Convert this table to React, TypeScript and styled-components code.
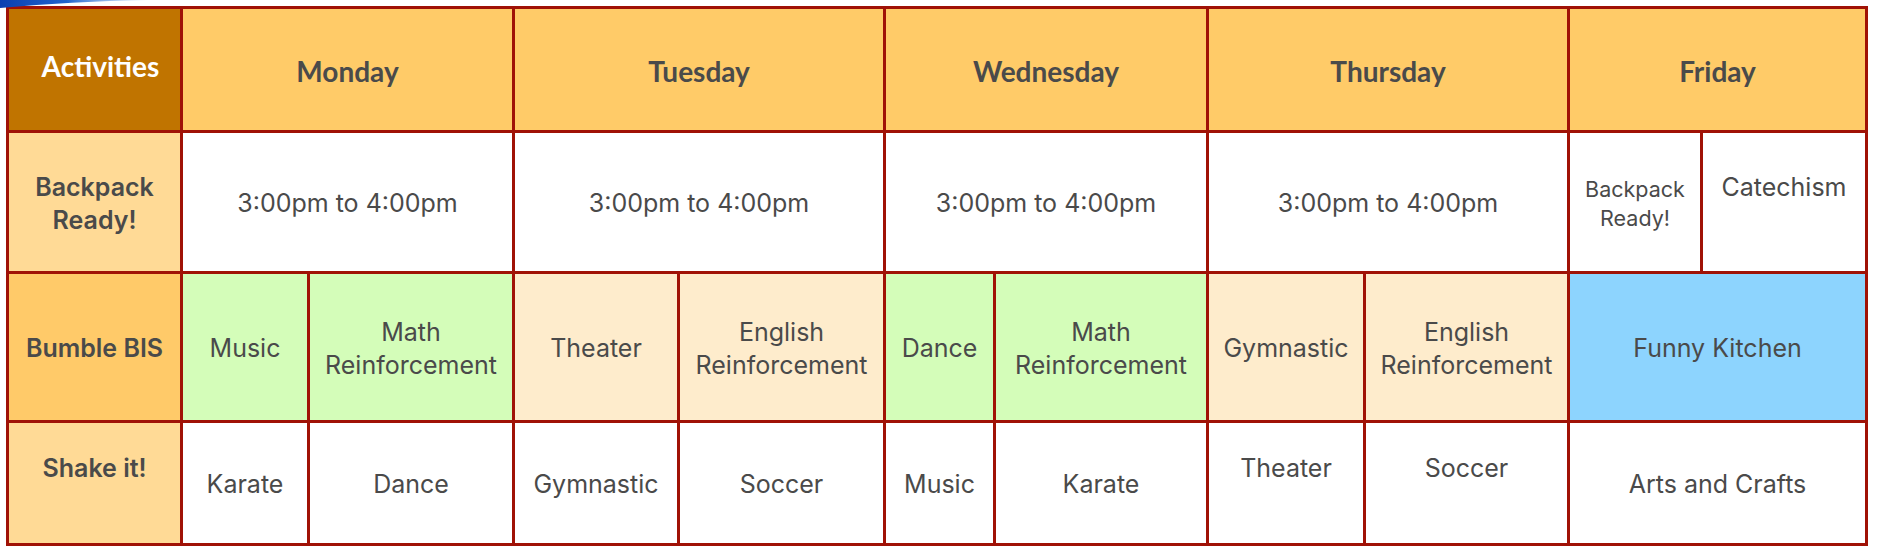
import React from "react";
import styled, { createGlobalStyle, css } from "styled-components";

const GlobalStyle = createGlobalStyle`
  html, body {
    margin: 0;
    padding: 0;
    background: #ffffff;
  }
  body {
    font-family: "Inter", "Liberation Sans", sans-serif;
  }
`;

const BORDER = "#a01206";
const TEXT = "#4a4a4a";

const Page = styled.div`
  position: relative;
  padding: 6px;
`;

const Swoosh = styled.svg`
  position: absolute;
  top: 0;
  left: 0;
  pointer-events: none;
`;

const Schedule = styled.div`
  display: inline-grid;
  grid-template-columns: 171px 124px 202px 162px 203px 107px 210px 154px 201px 130px 162px;
  grid-template-rows: 121px 138px 146px 120px;
  gap: 3px;
  padding: 3px;
  background: ${BORDER};
`;

type Span = { $span?: number };

const BaseCell = styled.div<Span>`
  display: flex;
  align-items: center;
  justify-content: center;
  text-align: center;
  box-sizing: border-box;
  grid-column: span ${(p) => p.$span ?? 1};
  color: ${TEXT};
`;

const HeaderCell = styled(BaseCell)<{ $corner?: boolean }>`
  font-family: "Comic Sans MS", "Lato", sans-serif;
  font-weight: 700;
  font-size: 28px;
  padding-top: 2px;
  background: #ffcb68;
  ${(p) =>
    p.$corner &&
    css`
      background: #c07400;
      color: #ffffff;
      padding: 0 0 8px 12px;
    `}
`;

const LabelCell = styled(BaseCell)<{ $strong?: boolean; $lift?: boolean }>`
  font-weight: 600;
  font-size: 25px;
  line-height: 33px;
  padding: 3px 10px ${(p) => (p.$lift ? "33px" : "0")};
  background: ${(p) => (p.$strong ? "#ffca69" : "#ffda96")};
`;

const tones = {
  white: "#ffffff",
  green: "#d4fdb9",
  cream: "#feeccc",
  blue: "#8dd4fe",
};

const Cell = styled(BaseCell)<{
  $tone?: keyof typeof tones;
  $small?: boolean;
  $lift?: boolean;
}>`
  font-weight: 400;
  font-size: ${(p) => (p.$small ? "21.5px" : "25px")};
  line-height: ${(p) => (p.$small ? "29px" : "32.5px")};
  padding: 3px 8px ${(p) => (p.$lift ? "32px" : "0")};
  background: ${(p) => tones[p.$tone ?? "white"]};
`;

const days = ["Monday", "Tuesday", "Wednesday", "Thursday", "Friday"];

export default function App() {
  return (
    <>
      <GlobalStyle />
      <Page>
        <Swoosh width="150" height="10" viewBox="0 0 150 10">
          <defs>
            <linearGradient id="sw" x1="0" y1="0" x2="1" y2="0">
              <stop offset="0" stopColor="#0b3fb0" />
              <stop offset="0.45" stopColor="#1f63cc" />
              <stop offset="1" stopColor="#6aa6ea" stopOpacity="0.2" />
            </linearGradient>
          </defs>
          <path d="M0 0 L148 0 Q70 1.5 0 8 Z" fill="url(#sw)" />
        </Swoosh>
        <Schedule>
          <HeaderCell $corner>Activities</HeaderCell>
          {days.map((d) => (
            <HeaderCell key={d} $span={2}>
              {d}
            </HeaderCell>
          ))}

          <LabelCell>Backpack Ready!</LabelCell>
          <Cell $span={2}>3:00pm to 4:00pm</Cell>
          <Cell $span={2}>3:00pm to 4:00pm</Cell>
          <Cell $span={2}>3:00pm to 4:00pm</Cell>
          <Cell $span={2}>3:00pm to 4:00pm</Cell>
          <Cell $small>Backpack Ready!</Cell>
          <Cell $lift>Catechism</Cell>

          <LabelCell $strong>Bumble BIS</LabelCell>
          <Cell $tone="green">Music</Cell>
          <Cell $tone="green">Math Reinforcement</Cell>
          <Cell $tone="cream">Theater</Cell>
          <Cell $tone="cream">English Reinforcement</Cell>
          <Cell $tone="green">Dance</Cell>
          <Cell $tone="green">Math Reinforcement</Cell>
          <Cell $tone="cream">Gymnastic</Cell>
          <Cell $tone="cream">English Reinforcement</Cell>
          <Cell $tone="blue" $span={2}>
            Funny Kitchen
          </Cell>

          <LabelCell $lift>Shake it!</LabelCell>
          <Cell>Karate</Cell>
          <Cell>Dance</Cell>
          <Cell>Gymnastic</Cell>
          <Cell>Soccer</Cell>
          <Cell>Music</Cell>
          <Cell>Karate</Cell>
          <Cell $lift>Theater</Cell>
          <Cell $lift>Soccer</Cell>
          <Cell $span={2}>Arts and Crafts</Cell>
        </Schedule>
      </Page>
    </>
  );
}
